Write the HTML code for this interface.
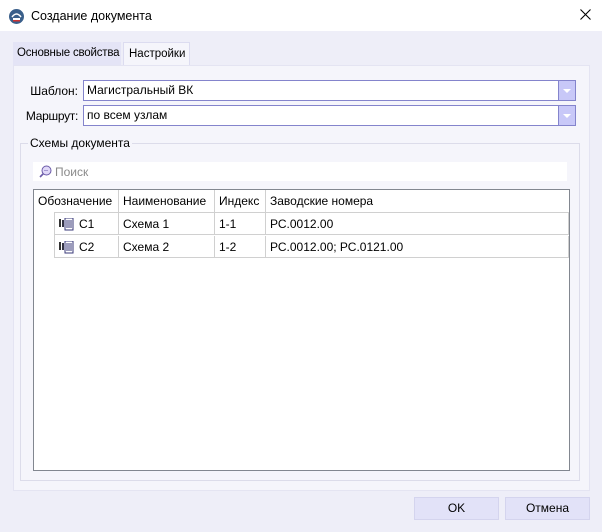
<!DOCTYPE html>
<html><head><meta charset="utf-8"><style>
*{box-sizing:border-box}
body{margin:0;width:602px;height:532px;overflow:hidden;font-family:"Liberation Sans",sans-serif;font-size:12px;color:#000;background:#eeeef8;position:relative}
.a{position:absolute;white-space:nowrap}
.title{left:0;top:0;width:602px;height:31px;background:#fff;}
.combo{height:21px;background:#fff;border:1px solid #8484cc;padding:2px 3px;}
.combo .btn{position:absolute;right:0;top:0;width:17px;height:19px;background:#c8c8f8;border-left:1px solid #8484cc}
.combo .btn:after{content:"";position:absolute;left:4px;top:8px;border-left:4px solid transparent;border-right:4px solid transparent;border-top:4px solid #fff}
.cell{position:absolute;height:22px;line-height:22px;padding-left:4px;border-right:1px solid #d0d0d0;border-bottom:1px solid #d0d0d0;white-space:nowrap}
.btnb{height:23px;background:#e2e2f8;border:1px solid #d4d4ee;text-align:center;line-height:21px}
</style></head><body>
<div class="a title">
 <svg class="a" style="left:9px;top:9px" width="15" height="15" viewBox="0 0 15 15"><circle cx="7.5" cy="7.5" r="7.5" fill="#3a5f8a"/><path d="M3 8 Q7.5 2 12 8" stroke="#fff" stroke-width="1.5" fill="none"/><rect x="4" y="9" width="7" height="2" fill="#fff"/><rect x="4" y="11" width="7" height="1.5" fill="#c33"/></svg>
 <div class="a" style="left:31px;top:9px;font-size:12.5px">Создание документа</div>
 <svg class="a" style="left:580px;top:9px" width="11" height="11" viewBox="0 0 11 11"><path d="M0.5 0.5L10.5 10.5M10.5 0.5L0.5 10.5" stroke="#000" stroke-width="1.1"/></svg>
</div>
<div class="a" style="left:13px;top:42px;width:108px;height:23px;background:#e4e4f6;padding:5px 0 0 4px;font-size:11.5px;letter-spacing:-0.2px">Основные свойства</div>
<div class="a" style="left:123px;top:42px;width:67px;height:24px;background:#f5f5fb;border:1px solid #dcdcf0;border-bottom:none;padding:5px 0 0 5px;font-size:11.5px">Настройки</div>
<div class="a" style="left:13px;top:65px;width:577px;height:426px;background:#f5f5fb;border:1px solid #e4e4f2"></div>
<div class="a" style="left:20px;top:84px;width:58px;text-align:right">Шаблон:</div>
<div class="a" style="left:20px;top:109px;width:58px;text-align:right;letter-spacing:-0.3px">Маршрут:</div>
<div class="a combo" style="left:83px;top:80px;width:493px">Магистральный ВК<div class="btn"></div></div>
<div class="a combo" style="left:83px;top:105px;width:493px">по всем узлам<div class="btn"></div></div>
<div class="a" style="left:20px;top:143px;width:560px;height:338px;border:1px solid #dcdcea"></div>
<div class="a" style="left:28px;top:136px;background:#f5f5fb;padding:0 2px">Схемы документа</div>
<div class="a" style="left:33px;top:162px;width:534px;height:19px;background:#fff;color:#8a8a8a;padding:3px 0 0 22px">Поиск
 <svg class="a" style="left:6px;top:3px" width="13" height="13" viewBox="0 0 13 13"><circle cx="7.5" cy="5.5" r="4.5" fill="#e0d8f8" stroke="#6a5aa8"/><path d="M4.5 8.5 L1 12" stroke="#6a5aa8" stroke-width="1.6"/><path d="M5.5 5.5h4" stroke="#6a5aa8" stroke-dasharray="1 1"/></svg></div>
<div class="a" style="left:33px;top:189px;width:537px;height:282px;background:#fff;border:1px solid #828790">
 <div class="cell" style="left:0;top:0;width:85px;border-bottom:none">Обозначение</div>
 <div class="cell" style="left:85px;top:0;width:96px;border-bottom:none">Наименование</div>
 <div class="cell" style="left:181px;top:0;width:51px;border-bottom:none">Индекс</div>
 <div class="cell" style="left:232px;top:0;width:303px;border-right:none;border-bottom:none">Заводские номера</div>
 <div class="a" style="left:20px;top:22px;width:515px;height:46px;border-top:1px solid #d0d0d0;border-left:1px solid #d0d0d0"></div>
 <div class="cell" style="left:20px;top:23px;width:65px;padding-left:25px">С1</div>
 <div class="cell" style="left:85px;top:23px;width:96px">Схема 1</div>
 <div class="cell" style="left:181px;top:23px;width:51px">1-1</div>
 <div class="cell" style="left:232px;top:23px;width:303px">РС.0012.00</div>
 <div class="cell" style="left:20px;top:46px;width:65px;padding-left:25px">С2</div>
 <div class="cell" style="left:85px;top:46px;width:96px">Схема 2</div>
 <div class="cell" style="left:181px;top:46px;width:51px">1-2</div>
 <div class="cell" style="left:232px;top:46px;width:303px">РС.0012.00; РС.0121.00</div>
 <svg class="a" style="left:25px;top:28px" width="15" height="13" viewBox="0 0 15 13"><rect x="0" y="1" width="2" height="8" fill="#333"/><rect x="3" y="2" width="2" height="7" fill="#334"/><rect x="6" y="0" width="8" height="12" fill="none" stroke="#3a3a7a"/><path d="M7 3h6M7 5h6M7 7h6M7 9h6" stroke="#3a3a7a"/></svg>
 <svg class="a" style="left:25px;top:51px" width="15" height="13" viewBox="0 0 15 13"><rect x="0" y="1" width="2" height="8" fill="#333"/><rect x="3" y="2" width="2" height="7" fill="#334"/><rect x="6" y="0" width="8" height="12" fill="none" stroke="#3a3a7a"/><path d="M7 3h6M7 5h6M7 7h6M7 9h6" stroke="#3a3a7a"/></svg>
</div>
<div class="a btnb" style="left:414px;top:497px;width:85px">OK</div>
<div class="a btnb" style="left:505px;top:497px;width:85px">Отмена</div>
</body></html>
